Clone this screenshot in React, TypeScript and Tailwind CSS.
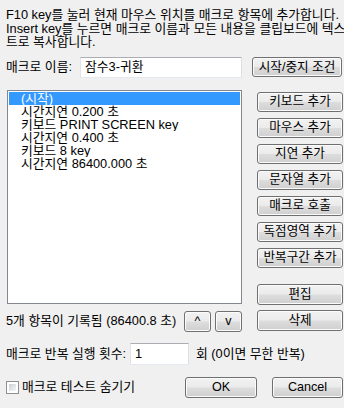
import type { ReactNode } from "react";

const font = {
  fontFamily: '"Liberation Sans", "Noto Sans CJK KR", sans-serif',
};

function WinButton({
  children,
  className = "",
}: {
  children: ReactNode;
  className?: string;
}) {
  return (
    <button
      className={`flex items-center justify-center whitespace-nowrap rounded-[3px] border border-[#707070] bg-[linear-gradient(to_bottom,#f2f2f2_0%,#ebebeb_48%,#dddddd_52%,#cfcfcf_100%)] text-[12.6px] leading-none text-black shadow-[inset_0_0_0_1px_#fbfbfb] ${className}`}
    >
      {children}
    </button>
  );
}

const items = [
  "(시작)",
  "시간지연 0.200 초",
  "키보드 PRINT SCREEN key",
  "시간지연 0.400 초",
  "키보드 8 key",
  "시간지연 86400.000 초",
];

const actions = [
  "키보드 추가",
  "마우스 추가",
  "지연 추가",
  "문자열 추가",
  "매크로 호출",
  "독점영역 추가",
  "반복구간 추가",
];

export default function App() {
  return (
    <div
      className="flex h-[408px] w-[344px] flex-col bg-[#f0f0f0] text-[12.8px] text-black"
      style={font}
    >
      {/* help text */}
      <div className="whitespace-nowrap pl-[6px] pt-[8px] leading-[13.5px]">
        <div>F10 key를 눌러 현재 마우스 위치를 매크로 항목에 추가합니다.</div>
        <div>Insert key를 누르면 매크로 이름과 모든 내용을 클립보드에 텍스</div>
        <div>트로 복사합니다.</div>
      </div>

      {/* macro name */}
      <div className="mt-[8px] flex h-[21px] items-center">
        <span className="ml-[6px] w-[74px] whitespace-nowrap">매크로 이름:</span>
        <div className="flex h-[21px] w-[162px] items-center border border-[#abadb3] border-b-[#e3e9ef] border-l-[#e2e3ea] border-r-[#dbdfe6] bg-white pl-[4px]">
          잠수3-귀환
        </div>
        <WinButton className="ml-[10px] h-[20px] w-[90px]">시작/중지 조건</WinButton>
      </div>

      {/* list + side buttons */}
      <div className="mt-[12px] flex">
        <div className="ml-[7px] flex w-[235px] flex-col">
          <div className="h-[214px] border border-[#828790] bg-white p-[1px]">
            {items.map((item, i) => (
              <div
                key={i}
                className={`h-[13px] overflow-hidden whitespace-nowrap pl-[12px] leading-[13px] ${
                  i === 0 ? "bg-[#3399ff] text-white" : ""
                }`}
              >
                {item}
              </div>
            ))}
          </div>
          <div className="mt-[7px] flex h-[21px] items-center justify-between">
            <span className="-ml-[1px] whitespace-nowrap">5개 항목이 기록됨 (86400.8 초)</span>
            <div className="flex gap-[4px]">
              <WinButton className="h-[21px] w-[27px] text-[#1a3a8a]">^</WinButton>
              <WinButton className="h-[21px] w-[27px] text-[#1a3a8a]">v</WinButton>
            </div>
          </div>
        </div>

        <div className="ml-[15px] flex w-[86px] flex-col pt-[2px]">
          <div className="flex flex-col gap-[6px]">
            {actions.map((a) => (
              <WinButton key={a} className="h-[20px] w-full">
                {a}
              </WinButton>
            ))}
          </div>
          <div className="mt-auto flex flex-col gap-[5px] pb-[1px]">
            <WinButton className="h-[21px] w-full">편집</WinButton>
            <WinButton className="h-[21px] w-full">삭제</WinButton>
          </div>
        </div>
      </div>

      {/* repeat count */}
      <div className="mt-[11px] flex h-[22px] items-center">
        <span className="ml-[6px] w-[124px] whitespace-nowrap">매크로 반복 실행 횟수:</span>
        <div className="flex h-[22px] w-[59px] items-center border border-[#abadb3] border-b-[#e3e9ef] border-l-[#e2e3ea] border-r-[#dbdfe6] bg-white pl-[4px]">
          1
        </div>
        <span className="ml-[7px] whitespace-nowrap">회 (0이면 무한 반복)</span>
      </div>

      {/* bottom row */}
      <div className="mt-[12px] flex h-[21px] items-center">
        <div className="ml-[6px] h-[13px] w-[13px] border border-[#8f8f8f] bg-white p-[2px]">
          <div className="h-full w-full bg-[linear-gradient(135deg,#cbcfd5,#f6f6f6)]" />
        </div>
        <span className="ml-[3px] w-[163px] whitespace-nowrap">매크로 테스트 숨기기</span>
        <WinButton className="h-[21px] w-[72px]">OK</WinButton>
        <WinButton className="ml-[15px] h-[21px] w-[71px]">Cancel</WinButton>
      </div>
    </div>
  );
}
